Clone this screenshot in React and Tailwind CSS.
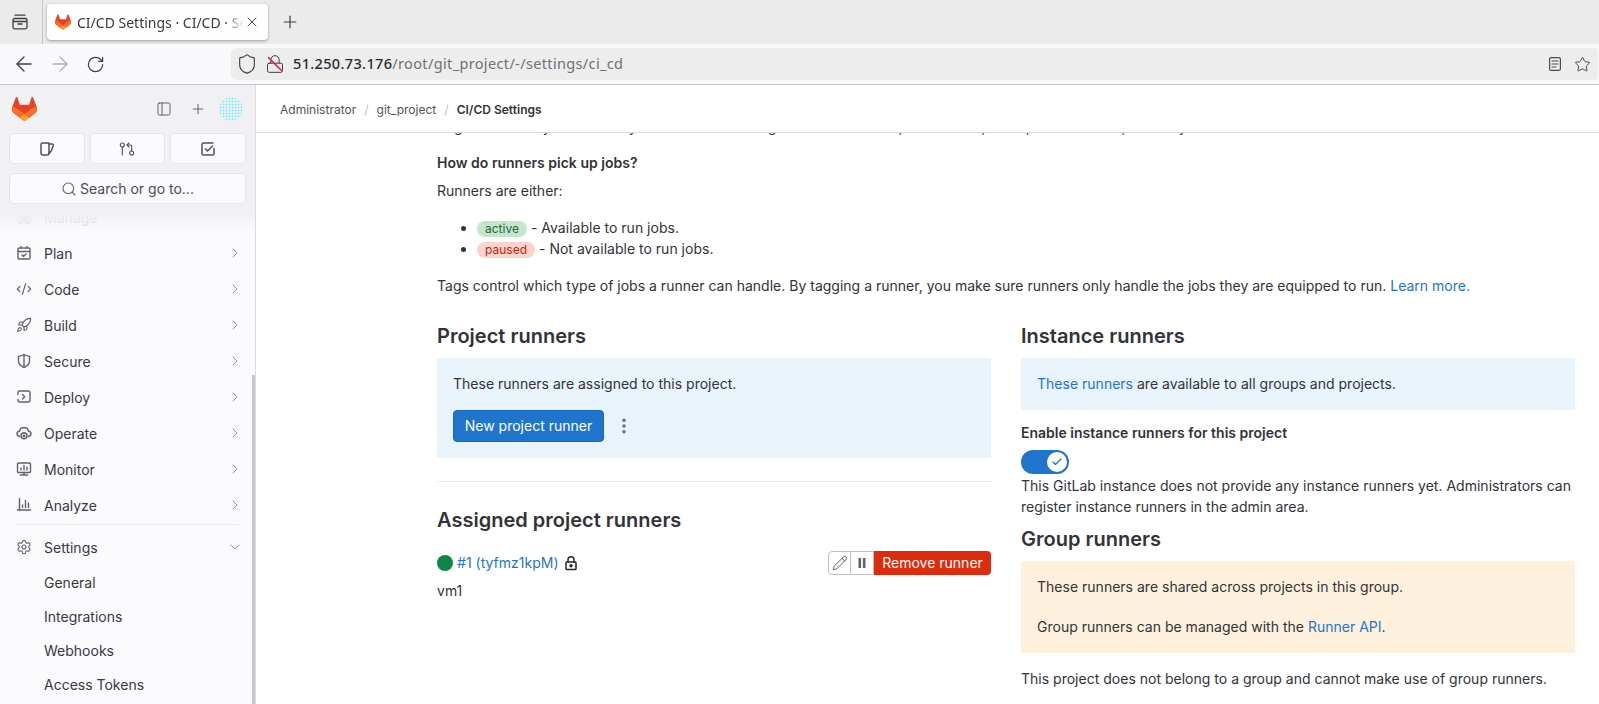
import React from "react";
import {
  ArrowLeft, ArrowRight, RotateCw, Plus, X, Shield, Star, ChevronRight, ChevronDown, Search,
  CodeXml, Rocket, Settings, PanelLeft, GitPullRequestArrow, Pencil, Lock, Check, Boxes,
} from "lucide-react";

const Tanuki = ({ className }) => (
  <svg viewBox="0 0 25 24" className={className}>
    <path d="m24.507 9.5-.034-.09L21.082.562a.896.896 0 0 0-1.694.091l-2.29 7.01H7.825L5.535.653a.898.898 0 0 0-1.694-.09L.451 9.411.416 9.5a6.297 6.297 0 0 0 2.09 7.278l.012.01.03.022 5.16 3.867 2.56 1.935 1.554 1.176a1.051 1.051 0 0 0 1.268 0l1.555-1.176 2.56-1.935 5.197-3.89.014-.01A6.297 6.297 0 0 0 24.507 9.5Z" fill="#E24329" />
    <path d="m24.507 9.5-.034-.09a11.44 11.44 0 0 0-4.56 2.051l-7.447 5.632 4.742 3.584 5.197-3.89.014-.01A6.297 6.297 0 0 0 24.507 9.5Z" fill="#FC6D26" />
    <path d="m7.707 20.677 2.56 1.935 1.555 1.176a1.051 1.051 0 0 0 1.268 0l1.555-1.176 2.56-1.935-4.743-3.584-4.755 3.584Z" fill="#FCA326" />
    <path d="M5.01 11.461a11.43 11.43 0 0 0-4.56-2.05L.416 9.5a6.297 6.297 0 0 0 2.09 7.278l.012.01.03.022 5.16 3.867 4.745-3.584-7.444-5.632Z" fill="#FC6D26" />
  </svg>
);

const Avatar = () => (
  <svg viewBox="0 0 24 24" className="w-6 h-6">
    <defs>
      <pattern id="idp" width="3" height="3" patternUnits="userSpaceOnUse">
        <rect width="3" height="3" fill="#e4f8fa" />
        <circle cx="1.5" cy="1.5" r="0.95" fill="#8fe0e8" />
      </pattern>
    </defs>
    <circle cx="12" cy="12" r="12" fill="url(#idp)" />
  </svg>
);

const S = ({ children, className = "w-4 h-4 text-[#626168]", sw = 1.4 }) => (
  <svg viewBox="0 0 16 16" className={`shrink-0 ${className}`} fill="none" stroke="currentColor" strokeWidth={sw} strokeLinecap="round" strokeLinejoin="round">
    {children}
  </svg>
);

const IssueIcon = () => (
  <S className="w-4 h-4 text-[#535158]" sw={1.5}>
    <path d="M10 2H3.5A1.5 1.5 0 0 0 2 3.5v9A1.5 1.5 0 0 0 3.5 14h5a1.5 1.5 0 0 0 1.5-1.5V2z" />
    <path d="M10 3h3.2c.8 0 1.3.6 1.1 1.3L12.2 10 10 12.5" />
  </S>
);
const TodoIcon = () => (
  <S className="w-4 h-4 text-[#535158]" sw={1.5}>
    <path d="M14 7.5v5A1.5 1.5 0 0 1 12.5 14h-9A1.5 1.5 0 0 1 2 12.5v-9A1.5 1.5 0 0 1 3.5 2H13" />
    <path d="M5.5 8l2 2 5-5" />
  </S>
);

const PlanI = () => (
  <S>
    <rect x="2" y="3" width="12" height="11" rx="1" />
    <path d="M2 6.5h12M5 1.5V3M11 1.5V3M6 10l1.5 1.5L10 9" />
  </S>
);
const CodeI = () => <CodeXml className="w-4 h-4 text-[#626168] shrink-0" strokeWidth={1.8} />;
const BuildI = () => <Rocket className="w-4 h-4 text-[#626168] shrink-0" strokeWidth={1.7} />;
const SecureI = () => (
  <S>
    <path d="M2.5 3.2c1.8 0 3.8-.6 5.5-1.7 1.7 1.1 3.7 1.7 5.5 1.7V8c0 3-2.5 5.3-5.5 6.5C5 13.3 2.5 11 2.5 8V3.2z" />
    <path d="M8 2v12" />
  </S>
);
const DeployI = () => (
  <S>
    <path d="M2 5.5v-2A1.5 1.5 0 0 1 3.5 2h9A1.5 1.5 0 0 1 14 3.5v8a1.5 1.5 0 0 1-1.5 1.5h-9A1.5 1.5 0 0 1 2 11.5v-1" />
    <path d="M6.5 5.5l2.2 2.2-2.2 2.2" />
  </S>
);
const OperateI = () => (
  <S>
    <path d="M3.6 11.5C2 11.2 1 10 1 8.8c0-1.3 1-2.4 2.4-2.6C4 4 5.8 2.5 8 2.5s4 1.5 4.6 3.7c1.4.2 2.4 1.3 2.4 2.6 0 1.2-1 2.4-2.6 2.7" />
    <circle cx="8" cy="10.7" r="3" />
    <circle cx="8" cy="10.7" r="0.8" />
  </S>
);
const MonitorI = () => (
  <S>
    <rect x="1.5" y="2" width="13" height="9.5" rx="1" />
    <path d="M8 11.5V14M4.5 14h7M5 9V7M8 9V4.5M11 9V6" />
  </S>
);
const AnalyzeI = () => (
  <S>
    <path d="M3.5 1.5V13.5M1.5 13H14.5M6.5 8v2.5M9.5 3.5v7M12.5 6v4.5" />
  </S>
);
const SettingsI = () => <Settings className="w-4 h-4 text-[#626168] shrink-0" strokeWidth={1.7} />;
const ManageI = () => <Boxes className="w-4 h-4 text-[#626168] shrink-0" strokeWidth={1.6} />;

const items = [
  ["Plan", PlanI],
  ["Code", CodeI],
  ["Build", BuildI],
  ["Secure", SecureI],
  ["Deploy", DeployI],
  ["Operate", OperateI],
  ["Monitor", MonitorI],
  ["Analyze", AnalyzeI],
];

const NavRow = ({ label, Icon, open }) => (
  <div className="h-9 flex items-center pl-[16px] pr-[12px] text-[14px] text-[#3a383f]">
    <Icon />
    <span className="ml-[12px] flex-1">{label}</span>
    {open ? (
      <ChevronDown className="w-4 h-4 text-[#89888d]" strokeWidth={1.4} />
    ) : (
      <ChevronRight className="w-4 h-4 text-[#89888d]" strokeWidth={1.4} />
    )}
  </div>
);

const SubRow = ({ label }) => (
  <div className="h-[34px] flex items-center pl-[44px] text-[14px] text-[#3a383f]">{label}</div>
);

function Browser() {
  return (
    <div className="shrink-0 font-['Noto_Sans',sans-serif]">
      <div className="h-[44px] bg-[#ebebeb] flex items-stretch">
        <div className="w-[43px] border-r border-[#c4c4c4] flex items-center justify-center pr-[3px]">
          <S className="w-4 h-4 text-[#3f3f43]" sw={1.3}>
            <path d="M3 1.2h10M1 6a1.5 1.5 0 0 1 1.5-1.5h11A1.5 1.5 0 0 1 15 6v7.3a1.5 1.5 0 0 1-1.5 1.5h-11A1.5 1.5 0 0 1 1 13.3V6zM1 7.5h14M6 10h4" />
          </S>
        </div>
        <div className="ml-[4px] mt-[4px] mb-[4px] w-[221px] bg-[#fefefe] rounded-[4px] shadow-[0_1px_3px_rgba(0,0,0,0.35)] flex items-center pl-[8px] pr-[8px]">
          <Tanuki className="w-4 h-4 shrink-0" />
          <span className="ml-[6px] text-[14px] text-[#3a3a3e] whitespace-nowrap overflow-hidden flex-1 [mask-image:linear-gradient(to_left,transparent,black_20px)]">
            CI/CD Settings · CI/CD · Settings
          </span>
          <X className="w-[16px] h-[16px] text-[#3f3f43] shrink-0" strokeWidth={1.4} />
        </div>
        <div className="ml-[12px] flex items-center">
          <Plus className="w-[20px] h-[20px] text-[#3f3f43]" strokeWidth={1.4} />
        </div>
      </div>
      <div className="h-[41px] bg-[#f9f9fb] border-b border-[#c8c8ca] flex items-center">
        <div className="w-[231px] flex items-center pl-[12px] gap-[12px] shrink-0">
          <ArrowLeft className="w-6 h-6 text-[#3f3f43]" strokeWidth={1.3} />
          <ArrowRight className="w-6 h-6 text-[#b0b0b3]" strokeWidth={1.3} />
          <RotateCw className="w-[19px] h-[19px] ml-[2px] text-[#3f3f43]" strokeWidth={1.5} />
        </div>
        <div className="flex-1 h-[32px] bg-[#ededee] rounded-l-[6px] rounded-r-[4px] flex items-center pl-[5px] pr-[7px] mr-[1px]">
          <Shield className="w-[22px] h-[22px] text-[#3f3f43]" strokeWidth={1.2} />
          <span className="relative ml-[7px] w-[20px] h-[20px] flex items-center justify-center">
            <Lock className="w-[20px] h-[20px] text-[#3f3f43]" strokeWidth={1.2} />
            <svg viewBox="0 0 16 16" className="absolute inset-0 w-5 h-5"><path d="M2.5 2.5l11 11" stroke="#e22850" strokeWidth="1.2" /></svg>
          </span>
          <span className="ml-[8px] text-[14.5px] tracking-[0.35px] text-[#3f3f43] flex-1 whitespace-nowrap">
            <span className="font-medium text-[#2b2a33]">51.250.73.176</span>
            <span className="text-[#707074]">/root/git_project/-/settings/ci_cd</span>
          </span>
          <S className="w-4 h-4 text-[#4a4a4f] mr-[11px]" sw={1.2}>
            <rect x="2.6" y="1.6" width="10.8" height="12.8" rx="1.5" />
            <path d="M5 5h6M5 8h6M5 11h4" />
          </S>
          <Star className="w-[17px] h-[17px] text-[#4a4a4f]" strokeWidth={1.4} />
        </div>
      </div>
    </div>
  );
}

function Sidebar() {
  return (
    <aside className="relative w-[256px] shrink-0 border-r border-[#dcdcde] bg-[#fbfafd] flex flex-col h-full overflow-hidden">
      <div className="relative z-10 bg-[#f1f1f3] h-[128px] shrink-0 px-[9px] pt-[12px]">
        <div className="flex items-center h-[24px] pl-[3px] pr-[3px]">
          <Tanuki className="w-[25px] h-[24px]" />
          <div className="flex-1" />
          <PanelLeft className="w-[16px] h-[16px] text-[#626168]" strokeWidth={1.5} />
          <Plus className="ml-[18px] w-[16px] h-[16px] text-[#626168]" strokeWidth={1.5} />
          <div className="ml-[13px]"><Avatar /></div>
        </div>
        <div className="mt-[12px] grid grid-cols-3 gap-[5px]">
          <div className="h-[31px] bg-[#fbfafd] rounded-[4px] border border-[#e6e6e9] flex items-center justify-center"><IssueIcon /></div>
          <div className="h-[31px] bg-[#fbfafd] rounded-[4px] border border-[#e6e6e9] flex items-center justify-center">
            <GitPullRequestArrow className="w-4 h-4 text-[#535158]" strokeWidth={1.7} />
          </div>
          <div className="h-[31px] bg-[#fbfafd] rounded-[4px] border border-[#e6e6e9] flex items-center justify-center"><TodoIcon /></div>
        </div>
        <div className="mt-[9px] h-[31px] bg-[#fbfafd] rounded-[4px] border border-[#e6e6e9] flex items-center justify-center text-[14px] text-[#4c4b51]">
          <Search className="w-4 h-4 text-[#626168] mr-[3px]" strokeWidth={1.6} />
          Search or go to...
        </div>
      </div>
      <div className="relative flex-1 overflow-hidden">
        <div className="-mt-[14px]">
          <NavRow label="Manage" Icon={ManageI} />
          {items.map(([l, I]) => <NavRow key={l} label={l} Icon={I} />)}
          <div className="mx-[16px] mt-[1px] mb-[4px] border-t border-[#ececef]" />
          <NavRow label="Settings" Icon={SettingsI} open />
          <SubRow label="General" />
          <SubRow label="Integrations" />
          <SubRow label="Webhooks" />
          <SubRow label="Access Tokens" />
        </div>
        <div className="absolute left-0 right-0 top-0 h-[36px] bg-gradient-to-b from-[#f1f1f3] via-[#fbfafdcc] to-[#fbfafd00]" />
        <div className="absolute right-0 top-[162px] bottom-0 w-[3px] bg-[#c9c9cb]" />
      </div>
    </aside>
  );
}

function Main() {
  return (
    <main className="flex-1 min-w-0 h-full flex flex-col bg-white text-[14px] leading-[20px] text-[#333238] tracking-[0.01px]">
      <div className="relative z-10 h-[48px] shrink-0 bg-white border-b border-[#dcdcde] flex items-center px-[24px] pt-[2px] text-[12px] text-[#535158]">
        <span>Administrator</span>
        <span className="mx-[8px] text-[#bfbfc3]">/</span>
        <span>git_project</span>
        <span className="mx-[8px] text-[#bfbfc3]">/</span>
        <span className="font-semibold text-[#333238]">CI/CD Settings</span>
      </div>
      <div className="flex-1 overflow-hidden pl-[181px] pr-[24px]">
        <p className="-mt-[16px] mb-[16px] whitespace-nowrap">
          Register as many runners as you want. You can register runners as separate users, on separate servers, and on your local machine.
        </p>
        <p className="font-semibold mb-[8px]">How do runners pick up jobs?</p>
        <p className="mb-[16px]">Runners are either:</p>
        <ul className="list-disc pl-[40px] mb-[17px] leading-[21px]">
          <li>
            <span className="inline-block align-middle -mt-[1px] h-[16px] leading-[16px] px-[8px] rounded-full bg-[#c3e6cd] text-[#24663b] text-[12px]">active</span>
            {" - Available to run jobs."}
          </li>
          <li>
            <span className="inline-block align-middle -mt-[1px] h-[16px] leading-[16px] px-[8px] rounded-full bg-[#fdd4cd] text-[#c91c00] text-[12px]">paused</span>
            {" - Not available to run jobs."}
          </li>
        </ul>
        <p className="whitespace-nowrap">
          Tags control which type of jobs a runner can handle. By tagging a runner, you make sure runners only handle the jobs they are equipped to run.{" "}
          <span className="text-[#1f75cb]">Learn more.</span>
        </p>
        <div className="grid grid-cols-2 gap-x-[30px] mt-[28px]">
          <section>
            <h3 className="text-[20px] leading-[24px] font-semibold mb-[10px]">Project runners</h3>
            <div className="bg-[#e9f3fc] p-[16px]">
              <p className="mb-[16px]">These runners are assigned to this project.</p>
              <div className="flex items-center">
                <button className="h-[32px] w-[151px] rounded-[4px] bg-[#1f75cb] border border-[#1068bf] text-white text-[14px]">New project runner</button>
                <svg viewBox="0 0 16 16" className="ml-[12px] w-4 h-4 text-[#737278]" fill="currentColor">
                  <circle cx="8" cy="2.2" r="1.8" />
                  <circle cx="8" cy="8" r="1.8" />
                  <circle cx="8" cy="13.8" r="1.8" />
                </svg>
              </div>
            </div>
            <hr className="mt-[23px] border-[#ececef]" />
            <h3 className="mt-[26px] text-[20px] leading-[24px] font-semibold">Assigned project runners</h3>
            <div className="mt-[19px] flex items-center h-[24px]">
              <span className="w-[16px] h-[16px] rounded-full bg-[#108548]" />
              <span className="ml-[4px] text-[#1f75cb]">#1 (tyfmz1kpM)</span>
              <S className="ml-[4px] w-4 h-4 text-[#26252a]" sw={1.5}>
                <path d="M5 7V4.8a3 3 0 0 1 6 0V7" />
                <rect x="3" y="7" width="10" height="7.5" rx="0.8" />
                <circle cx="8" cy="10.7" r="1" fill="currentColor" />
              </S>
              <div className="flex-1" />
              <div className="flex h-[24px]">
                <span className="w-[23px] border border-[#bfbfc3] rounded-l-[4px] flex items-center justify-center">
                  <Pencil className="w-4 h-4 text-[#535158]" strokeWidth={1.4} />
                </span>
                <span className="w-[23px] border-y border-r border-[#bfbfc3] flex items-center justify-center">
                  <svg viewBox="0 0 16 16" className="w-4 h-4 text-[#626168]" fill="currentColor">
                    <rect x="4.5" y="3" width="2.6" height="10" rx="0.5" />
                    <rect x="8.9" y="3" width="2.6" height="10" rx="0.5" />
                  </svg>
                </span>
                <span className="w-[117px] bg-[#dd2b0e] rounded-r-[4px] text-white flex items-center justify-center">Remove runner</span>
              </div>
            </div>
            <p className="mt-[6px]">vm1</p>
          </section>
          <section>
            <h3 className="text-[20px] leading-[24px] font-semibold mb-[10px]">Instance runners</h3>
            <div className="bg-[#e9f3fc] p-[16px]">
              <span className="text-[#1f75cb]">These runners</span> are available to all groups and projects.
            </div>
            <p className="mt-[13px] font-semibold">Enable instance runners for this project</p>
            <div className="mt-[7px] w-[48px] h-[24px] rounded-full bg-[#1f75cb] flex items-center justify-end pr-[2px]">
              <span className="w-[20px] h-[20px] rounded-full bg-white flex items-center justify-center">
                <Check className="w-[12px] h-[12px] text-[#1f75cb]" strokeWidth={2.4} />
              </span>
            </div>
            <p className="mt-[1px] leading-[21px]">
              This GitLab instance does not provide any instance runners yet. Administrators can register instance runners in the admin area.
            </p>
            <h3 className="mt-[10px] mb-[10px] text-[20px] leading-[24px] font-semibold">Group runners</h3>
            <div className="bg-[#fdf1dd] p-[16px]">
              <p className="mb-[20px]">These runners are shared across projects in this group.</p>
              <p>Group runners can be managed with the <span className="text-[#1f75cb]">Runner API</span>.</p>
            </div>
            <p className="mt-[16px]">This project does not belong to a group and cannot make use of group runners.</p>
          </section>
        </div>
      </div>
    </main>
  );
}

export default function App() {
  return (
    <div className="w-[1599px] h-[704px] overflow-hidden flex flex-col bg-white font-['Inter',sans-serif]">
      <Browser />
      <div className="flex flex-1 min-h-0">
        <Sidebar />
        <Main />
      </div>
    </div>
  );
}
